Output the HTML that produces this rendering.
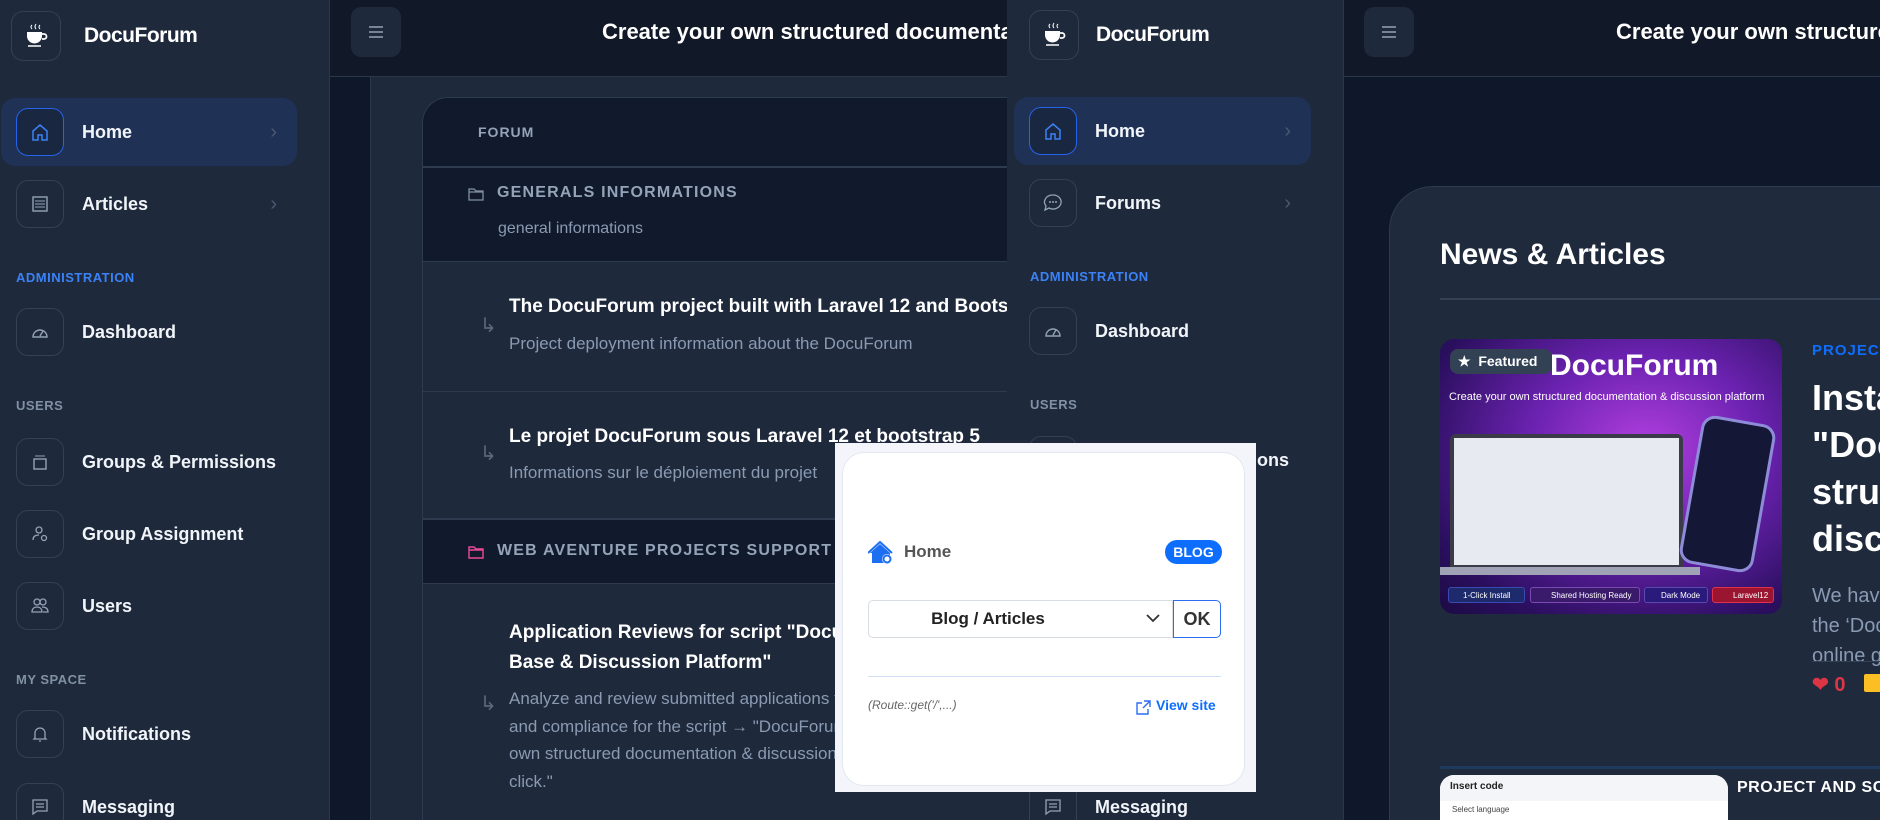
<!DOCTYPE html>
<html style="width:1880px;height:820px;overflow:hidden"><head><meta charset="utf-8"><style>
*{box-sizing:border-box;margin:0;padding:0}
body{width:1880px;height:820px;overflow:hidden;background:#0f172a;font-family:"Liberation Sans",sans-serif;position:relative;color:#fff}
.a{position:absolute}
.side{background:#1e293b;border-right:1px solid #2b3648}
.logo{width:50px;height:50px;border:1px solid #334155;border-radius:12px;display:flex;align-items:center;justify-content:center}
.brand{font-weight:bold;font-size:21px;color:#fff;letter-spacing:-0.5px}
.item{height:68px;border-radius:14px;display:flex;align-items:center}
.item.act{background:#1f3154}
.ib{width:48px;height:48px;border:1px solid #334155;border-radius:12px;display:flex;align-items:center;justify-content:center;margin-left:15px;margin-right:18px}
.act .ib{border-color:#2563eb;background:#1a2740}
.lbl{font-size:18px;font-weight:bold;color:#f1f5f9}
.chev{position:absolute;right:20px;color:#4b5870;font-size:20px}
.sec{font-size:13px;font-weight:bold;letter-spacing:.5px;color:#8190a5}
.head{background:#111827;border-bottom:1px solid #2b3648}
.ham{width:50px;height:50px;border-radius:10px;background:#1e293b;display:flex;align-items:center;justify-content:center}
.title{font-size:22px;font-weight:bold;color:#fff;white-space:nowrap}
.gray{color:#8a9ab2}
</style></head><body>

<!-- MAIN 1 -->
<div class="a" style="left:330px;top:0;width:677px;height:820px;background:#1e293b;overflow:hidden">
  <div class="a head" style="left:0;top:0;width:677px;height:77px"></div>
  <div class="a ham" style="left:21px;top:7px"><svg width="16" height="14"><path d="M1 2h14M1 7h14M1 12h14" stroke="#94a3b8" stroke-width="1.6"/></svg></div>
  <div class="a title" style="left:272px;top:19px">Create your own structured documentation</div>
  <div class="a" style="left:0;top:77px;width:41px;height:743px;background:#0f172a;border-right:1px solid #2b3648"></div>
  <div class="a" style="left:92px;top:97px;width:600px;height:730px;border:1px solid #2d3a50;border-right:none;border-radius:26px 0 0 0;overflow:hidden">
    <div class="a" style="left:0;top:0;width:600px;height:70px;background:#111a2c;border-bottom:2px solid #2d3a50"></div>
    <div class="a sec" style="left:55px;top:26px;color:#94a3b8;font-size:14px;letter-spacing:1px">FORUM</div>
    <div class="a" style="left:0;top:70px;width:600px;height:94px;background:#111a2c;border-bottom:1px solid #2d3a50"></div>
    <svg class="a" style="left:45px;top:89px" width="16" height="14"><path d="M1 2h5l2 2h7v9H1z M1 5h14" fill="none" stroke="#8190a5" stroke-width="1.3"/></svg>
    <div class="a" style="left:74px;top:86px;font-size:16px;font-weight:bold;letter-spacing:1.2px;color:#94a3b8">GENERALS INFORMATIONS</div>
    <div class="a gray" style="left:75px;top:122px;font-size:16px">general informations</div>
    <div class="a" style="left:57px;top:215px;color:#5b677a;font-size:20px">↳</div>
    <div class="a" style="left:86px;top:198px;font-size:19px;font-weight:bold;white-space:nowrap">The DocuForum project built with Laravel 12 and Bootstrap</div>
    <div class="a gray" style="left:86px;top:236px;font-size:17px;white-space:nowrap">Project deployment information about the DocuForum</div>
    <div class="a" style="left:0;top:293px;width:600px;height:1px;background:#2d3a50"></div>
    <div class="a" style="left:57px;top:343px;color:#5b677a;font-size:20px">↳</div>
    <div class="a" style="left:86px;top:328px;font-size:19px;font-weight:bold;white-space:nowrap">Le projet DocuForum sous Laravel 12 et bootstrap 5</div>
    <div class="a gray" style="left:86px;top:365px;font-size:17px;white-space:nowrap">Informations sur le déploiement du projet</div>
    <div class="a" style="left:0;top:420px;width:600px;height:66px;background:#111a2c;border-top:2px solid #2d3a50;border-bottom:1px solid #2d3a50"></div>
    <svg class="a" style="left:45px;top:447px" width="16" height="14"><path d="M1 2h5l2 2h7v9H1z M1 5h14" fill="none" stroke="#ec4899" stroke-width="1.4"/></svg>
    <div class="a" style="left:74px;top:444px;font-size:16px;font-weight:bold;letter-spacing:1.2px;color:#94a3b8;white-space:nowrap">WEB AVENTURE PROJECTS SUPPORT</div>
    <div class="a" style="left:86px;top:520px;font-size:19px;font-weight:bold;line-height:30px;white-space:nowrap">Application Reviews for script "DocuForum - Knowledge<br>Base &amp; Discussion Platform"</div>
    <div class="a" style="left:57px;top:593px;color:#5b677a;font-size:20px">↳</div>
    <div class="a gray" style="left:86px;top:587px;font-size:17px;line-height:27.5px;white-space:nowrap">Analyze and review submitted applications for quality<br>and compliance for the script → "DocuForum - Create your<br>own structured documentation &amp; discussion platform in one<br>click."</div>
  </div>
</div>

<!-- SIDEBAR 1 -->
<div class="a side" style="left:0;top:0;width:330px;height:820px">
  <div class="a logo" style="left:11px;top:11px"><svg width="24" height="26"><path d="M8 2q-2 2 0 4M12 1q-2 3 0 5M16 2q-2 2 0 4" fill="none" stroke="#fff" stroke-width="1"/><path d="M3 9h15v4a7.5 7.5 0 0 1-15 0z" fill="#fff"/><path d="M18 11h2a2.5 2.5 0 0 1 0 5h-2" fill="none" stroke="#fff" stroke-width="1.8"/><path d="M4 23h13" stroke="#fff" stroke-width="1.5"/></svg></div>
  <div class="a brand" style="left:84px;top:24px">DocuForum</div>
  <div class="a item act" style="left:1px;top:98px;width:296px"><div class="ib"><svg width="20" height="20"><path d="M3 9L10 3l7 6v9h-5v-5H8v5H3z" fill="none" stroke="#3b82f6" stroke-width="1.5"/></svg></div><span class="lbl">Home</span><span class="chev">›</span></div>
  <div class="a item" style="left:1px;top:170px;width:296px"><div class="ib"><svg width="20" height="20"><rect x="3" y="3" width="14" height="14" fill="none" stroke="#94a3b8" stroke-width="1.4"/><path d="M5 7h10M5 10h10M5 13h10" stroke="#94a3b8"/></svg></div><span class="lbl">Articles</span><span class="chev">›</span></div>
  <div class="a sec" style="left:16px;top:270px;color:#3b82f6">ADMINISTRATION</div>
  <div class="a item" style="left:1px;top:298px;width:296px"><div class="ib"><svg width="20" height="20"><path d="M3 15a7 7 0 1 1 14 0z M10 14l3-5" fill="none" stroke="#94a3b8" stroke-width="1.4"/></svg></div><span class="lbl">Dashboard</span></div>
  <div class="a sec" style="left:16px;top:398px">USERS</div>
  <div class="a item" style="left:1px;top:428px;width:296px"><div class="ib"><svg width="20" height="20"><rect x="4" y="7" width="12" height="10" fill="none" stroke="#94a3b8" stroke-width="1.4"/><path d="M5 4h10" stroke="#94a3b8"/></svg></div><span class="lbl">Groups &amp; Permissions</span></div>
  <div class="a item" style="left:1px;top:500px;width:296px"><div class="ib"><svg width="20" height="20"><circle cx="9" cy="6" r="3" fill="none" stroke="#94a3b8" stroke-width="1.3"/><path d="M3 16c0-4 3-5 6-5" fill="none" stroke="#94a3b8" stroke-width="1.3"/><circle cx="14" cy="14" r="2.5" fill="none" stroke="#94a3b8" stroke-width="1.3"/></svg></div><span class="lbl">Group Assignment</span></div>
  <div class="a item" style="left:1px;top:572px;width:296px"><div class="ib"><svg width="20" height="20"><circle cx="7" cy="6" r="3" fill="none" stroke="#94a3b8" stroke-width="1.3"/><circle cx="13" cy="6" r="3" fill="none" stroke="#94a3b8" stroke-width="1.3"/><path d="M2 16c0-4 3-5 5-5s5 1 5 5zM12 11c3 0 6 1 6 5h-5" fill="none" stroke="#94a3b8" stroke-width="1.3"/></svg></div><span class="lbl">Users</span></div>
  <div class="a sec" style="left:16px;top:672px">MY SPACE</div>
  <div class="a item" style="left:1px;top:700px;width:296px"><div class="ib"><svg width="20" height="20"><path d="M5 14V9a5 5 0 0 1 10 0v5l1 1H4z M9 17h2" fill="none" stroke="#94a3b8" stroke-width="1.3"/></svg></div><span class="lbl">Notifications</span></div>
  <div class="a item" style="left:1px;top:773px;width:296px"><div class="ib"><svg width="20" height="20"><path d="M3 3h14v11H7l-4 3z M6 7h8M6 10h8" fill="none" stroke="#94a3b8" stroke-width="1.3"/></svg></div><span class="lbl">Messaging</span></div>
</div>

<!-- MAIN 2 -->
<div class="a" style="left:1344px;top:0;width:536px;height:820px;background:#0f172a;overflow:hidden">
  <div class="a head" style="left:0;top:0;width:536px;height:77px"></div>
  <div class="a ham" style="left:20px;top:7px"><svg width="16" height="14"><path d="M1 2h14M1 7h14M1 12h14" stroke="#94a3b8" stroke-width="1.6"/></svg></div>
  <div class="a title" style="left:272px;top:19px">Create your own structured documentation</div>
  <div class="a" style="left:45px;top:186px;width:600px;height:700px;background:#1f2a3d;border:1px solid #2d3a50;border-radius:44px 0 0 0"></div>
  <div class="a" style="left:96px;top:238px;font-size:30px;font-weight:bold">News &amp; Articles</div>
  <div class="a" style="left:96px;top:298px;width:500px;height:2px;background:#334155"></div>
  <div class="a" style="left:96px;top:339px;width:342px;height:275px;border-radius:14px;overflow:hidden;background:radial-gradient(ellipse at 60% 40%,#b23fe0 0%,#6b22b0 40%,#2a0f5e 80%,#1c0b44 100%)">
    <div class="a" style="left:110px;top:10px;font-size:30px;font-weight:bold">DocuForum</div>
    <div class="a" style="left:9px;top:52px;font-size:11px;white-space:nowrap">Create your own structured documentation &amp; discussion platform</div>
    <div class="a" style="left:10px;top:95px;width:233px;height:135px;background:#3a3a48;border-radius:6px 6px 0 0;padding:4px"><div style="width:100%;height:100%;background:#e8eaf2"></div></div>
    <div class="a" style="left:0;top:228px;width:260px;height:8px;background:#a0a3b5"></div>
    <div class="a" style="left:250px;top:80px;width:75px;height:150px;background:#141836;border:3px solid #8e8cd8;border-radius:14px;transform:rotate(10deg)"></div>
    <div class="a" style="left:8px;top:248px;width:77px;height:16px;background:#1d2a6b;border:1px solid #3b4ab0;border-radius:3px;font-size:8px;padding:3px 14px;white-space:nowrap">1-Click Install</div>
    <div class="a" style="left:90px;top:248px;width:110px;height:16px;background:#3a1a6b;border:1px solid #7a4ab0;border-radius:3px;font-size:8px;padding:3px 20px;white-space:nowrap">Shared Hosting Ready</div>
    <div class="a" style="left:204px;top:248px;width:64px;height:16px;background:#2a1a7b;border:1px solid #5a4ab0;border-radius:3px;font-size:8px;padding:3px 16px;white-space:nowrap">Dark Mode</div>
    <div class="a" style="left:272px;top:248px;width:62px;height:16px;background:#9b1530;border:1px solid #e0304a;border-radius:3px;font-size:8px;padding:3px 20px">Laravel12</div>
    <div class="a" style="left:10px;top:10px;width:102px;height:25px;background:#334155;border-radius:8px;font-size:14px;font-weight:bold;padding:4px 8px">★&nbsp; Featured</div>
  </div>
  <div class="a" style="left:468px;top:342px;font-size:15px;font-weight:bold;color:#0d6efd;letter-spacing:1px">PROJECT</div>
  <div class="a" style="left:468px;top:374px;font-size:36px;font-weight:bold;line-height:47px;white-space:nowrap">Installing<br>"DocuForum<br>structured<br>discussion</div>
  <div class="a gray" style="left:468px;top:581px;font-size:20px;line-height:30px;white-space:nowrap">We have<br>the ‘DocuForum<br>online g</div>
  <div class="a" style="left:468px;top:661px;width:100px;height:1px;background:#334155"></div>
  <div class="a" style="left:468px;top:672px;font-size:20px;color:#dc3545;font-weight:bold">❤ 0</div>
  <div class="a" style="left:520px;top:674px;width:20px;height:18px;background:#fbbf24;border-radius:2px"></div>
  <div class="a" style="left:96px;top:766px;width:500px;height:3px;background:#1e3a5f"></div>
  <div class="a" style="left:96px;top:775px;width:288px;height:60px;background:#fff;border-radius:14px 14px 0 0;overflow:hidden"><div style="background:#f3f5f9;height:26px;padding:6px 10px;font-size:10px;color:#222;font-weight:bold">Insert code</div><div style="font-size:8px;color:#444;padding:4px 12px">Select language</div></div>
  <div class="a" style="left:393px;top:779px;font-size:16px;font-weight:bold;letter-spacing:.5px;white-space:nowrap">PROJECT AND SCRIPTS</div>
</div>

<!-- SIDEBAR 2 -->
<div class="a side" style="left:1007px;top:0;width:337px;height:820px">
  <div class="a logo" style="left:22px;top:10px"><svg width="24" height="26"><path d="M8 2q-2 2 0 4M12 1q-2 3 0 5M16 2q-2 2 0 4" fill="none" stroke="#fff" stroke-width="1"/><path d="M3 9h15v4a7.5 7.5 0 0 1-15 0z" fill="#fff"/><path d="M18 11h2a2.5 2.5 0 0 1 0 5h-2" fill="none" stroke="#fff" stroke-width="1.8"/><path d="M4 23h13" stroke="#fff" stroke-width="1.5"/></svg></div>
  <div class="a brand" style="left:89px;top:23px">DocuForum</div>
  <div class="a item act" style="left:7px;top:97px;width:297px"><div class="ib"><svg width="20" height="20"><path d="M3 9L10 3l7 6v9h-5v-5H8v5H3z" fill="none" stroke="#3b82f6" stroke-width="1.5"/></svg></div><span class="lbl">Home</span><span class="chev">›</span></div>
  <div class="a item" style="left:7px;top:169px;width:297px"><div class="ib"><svg width="22" height="22"><path d="M11 3a8 7 0 1 1-4 13l-4 2 1-4a8 7 0 0 1 7-11z" fill="none" stroke="#94a3b8" stroke-width="1.3"/><circle cx="8" cy="10" r="1" fill="#94a3b8"/><circle cx="11" cy="10" r="1" fill="#94a3b8"/><circle cx="14" cy="10" r="1" fill="#94a3b8"/></svg></div><span class="lbl">Forums</span><span class="chev">›</span></div>
  <div class="a sec" style="left:23px;top:269px;color:#3b82f6">ADMINISTRATION</div>
  <div class="a item" style="left:7px;top:297px;width:297px"><div class="ib"><svg width="20" height="20"><path d="M3 15a7 7 0 1 1 14 0z M10 14l3-5" fill="none" stroke="#94a3b8" stroke-width="1.4"/></svg></div><span class="lbl">Dashboard</span></div>
  <div class="a sec" style="left:23px;top:397px">USERS</div>
  <div class="a item" style="left:7px;top:426px;width:297px"><div class="ib"></div><span class="lbl">Groups &amp; Permissions</span></div>
  <div class="a item" style="left:7px;top:773px;width:297px"><div class="ib"><svg width="20" height="20"><path d="M3 3h14v11H7l-4 3z M6 7h8M6 10h8" fill="none" stroke="#94a3b8" stroke-width="1.3"/></svg></div><span class="lbl">Messaging</span></div>
</div>

<!-- POPUP -->
<div class="a" style="left:835px;top:443px;width:421px;height:349px;background:#f3f5fa">
  <div class="a" style="left:7px;top:9px;width:403px;height:334px;background:#fff;border:1px solid #e3e7ef;border-radius:22px">
    <svg class="a" style="left:25px;top:88px" width="26" height="24"><path d="M2 12L12 3l10 9v10H4V12" fill="#1d6ff2"/><path d="M0 12L12 1l12 11" fill="none" stroke="#1d6ff2" stroke-width="2"/><circle cx="19" cy="18" r="5" fill="#fff"/><circle cx="19" cy="18" r="3.5" fill="none" stroke="#1d6ff2" stroke-width="2"/></svg>
    <div class="a" style="left:61px;top:89px;font-size:17px;font-weight:bold;color:#555">Home</div>
    <div class="a" style="left:322px;top:87px;width:57px;height:24px;background:#0d6efd;border-radius:12px;color:#fff;font-size:14px;font-weight:bold;text-align:center;line-height:24px">BLOG</div>
    <div class="a" style="left:25px;top:147px;width:305px;height:38px;border:1px solid #d8dce3;border-radius:5px 0 0 5px"></div>
    <div class="a" style="left:25px;top:156px;width:240px;text-align:center;font-size:17px;font-weight:bold;color:#222">Blog / Articles</div>
    <svg class="a" style="left:303px;top:161px" width="14" height="9"><path d="M1 1l6 6 6-6" fill="none" stroke="#333" stroke-width="1.8"/></svg>
    <div class="a" style="left:330px;top:147px;width:48px;height:38px;border:1px solid #2b6ef2;border-radius:0 5px 5px 0;font-size:18px;font-weight:bold;color:#333;text-align:center;line-height:36px">OK</div>
    <div class="a" style="left:25px;top:223px;width:353px;height:1px;background:#cfe0f5"></div>
    <div class="a" style="left:25px;top:245px;font-size:12px;font-style:italic;color:#666">(Route::get('/',...)</div>
    <svg class="a" style="left:292px;top:247px" width="16" height="16"><path d="M7 3H2v11h11V9 M9 1h6v6 M15 1L8 8" fill="none" stroke="#2b6ef2" stroke-width="1.4"/></svg>
    <div class="a" style="left:313px;top:244px;font-size:14px;font-weight:bold;color:#0d6efd">View site</div>
  </div>
</div>
</body></html>
